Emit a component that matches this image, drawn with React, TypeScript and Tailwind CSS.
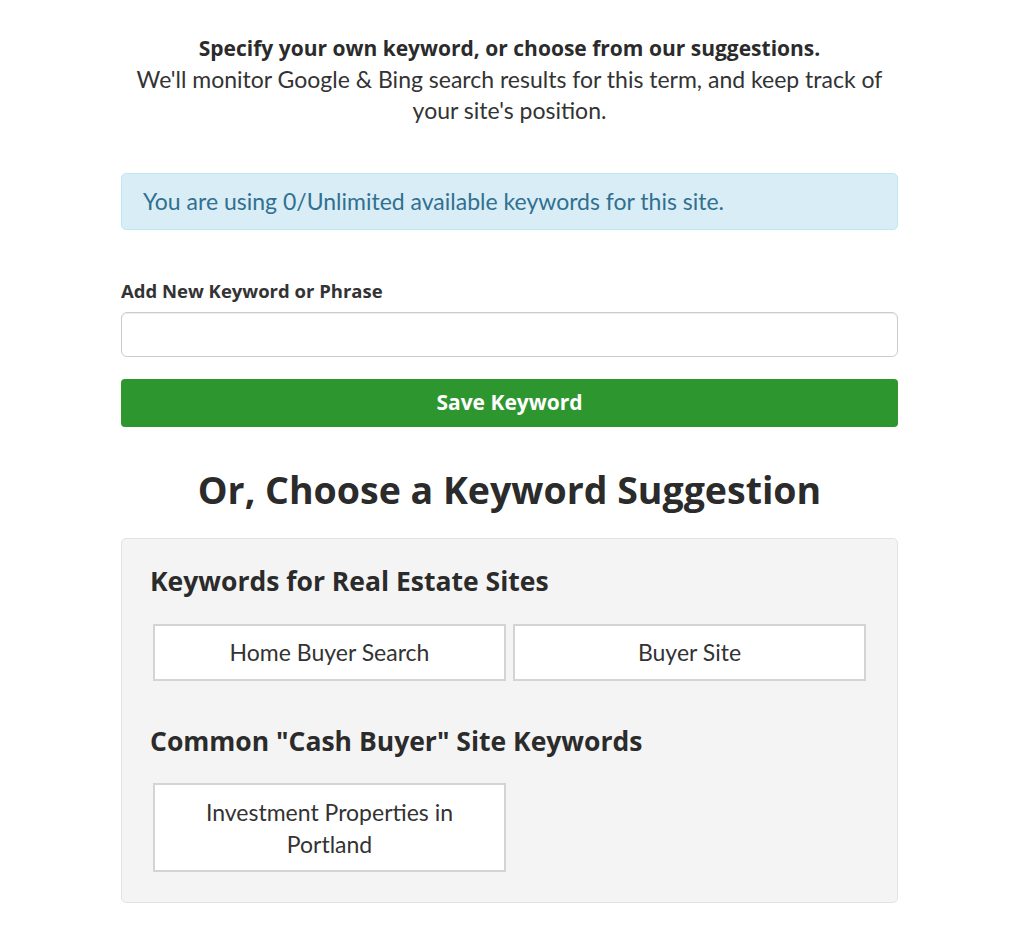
import React from "react";

const bold = { fontFamily: "'Open Sans', Lato, sans-serif" };

export default function App() {
  return (
    <div
      className="w-full min-h-[930px] bg-white text-[#333]"
      style={{ fontFamily: "Lato, 'Open Sans', sans-serif" }}
    >
      <div className="ml-[121px] w-[777px] pt-[33px] pb-[28px]">
        <p style={bold} className="text-center font-bold text-[21px] leading-[31px] text-[#2b2b2b]">
          Specify your own keyword, or choose from our suggestions.
        </p>
        <p className="text-center text-[23px] leading-[31px] text-[#333]">
          We'll monitor Google &amp; Bing search results for this term, and keep track of
          <br />
          your site's position.
        </p>

        <div className="mt-[47px] h-[57px] rounded-[5px] border border-[#bce8f1] bg-[#d9edf7] px-[21px] flex items-center">
          <span className="text-[23px] text-[#31708f]">
            You are using 0/Unlimited available keywords for this site.
          </span>
        </div>

        <label style={bold} className="block mt-[49px] text-[18.5px] font-bold leading-[24px] text-[#333]">
          Add New Keyword or Phrase
        </label>
        <input
          type="text"
          className="mt-[9px] block w-full h-[45px] rounded-[6px] border border-[#cccccc] bg-white px-3 shadow-[inset_0_1px_1px_rgba(0,0,0,0.075)] outline-none"
        />
        <button style={bold} className="mt-[22px] w-full h-[48px] rounded-[4px] bg-[#2e962f] text-white font-bold text-[21px] flex items-center justify-center">
          Save Keyword
        </button>

        <h2 style={bold} className="mt-[39px] text-center font-bold text-[37.5px] leading-[48px] text-[#2b2b2b]">
          Or, Choose a Keyword Suggestion
        </h2>

        <div className="mt-[24px] rounded-[5px] border border-[#e3e3e3] bg-[#f4f4f4] px-[28px] pt-[25px] pb-[30px]">
          <h3 style={bold} className="font-bold text-[26.5px] leading-[34px] text-[#2b2b2b]">
            Keywords for Real Estate Sites
          </h3>
          <div className="mt-[26px] mx-[3px] grid grid-cols-2 gap-[7px]">
            <div className="h-[57px] border-2 border-[#d4d4d4] bg-white flex items-center justify-center text-[23px] text-[#333]">
              Home Buyer Search
            </div>
            <div className="h-[57px] border-2 border-[#d4d4d4] bg-white flex items-center justify-center text-[23px] text-[#333]">
              Buyer Site
            </div>
          </div>

          <h3 style={bold} className="mt-[43px] font-bold text-[26.5px] leading-[34px] text-[#2b2b2b]">
            Common "Cash Buyer" Site Keywords
          </h3>
          <div className="mt-[25px] mx-[3px] grid grid-cols-2 gap-[7px]">
            <div className="h-[89px] border-2 border-[#d4d4d4] bg-white flex items-center justify-center text-center px-[40px] text-[23px] leading-[32px] text-[#333]">
              Investment Properties in Portland
            </div>
          </div>
        </div>
      </div>
    </div>
  );
}
